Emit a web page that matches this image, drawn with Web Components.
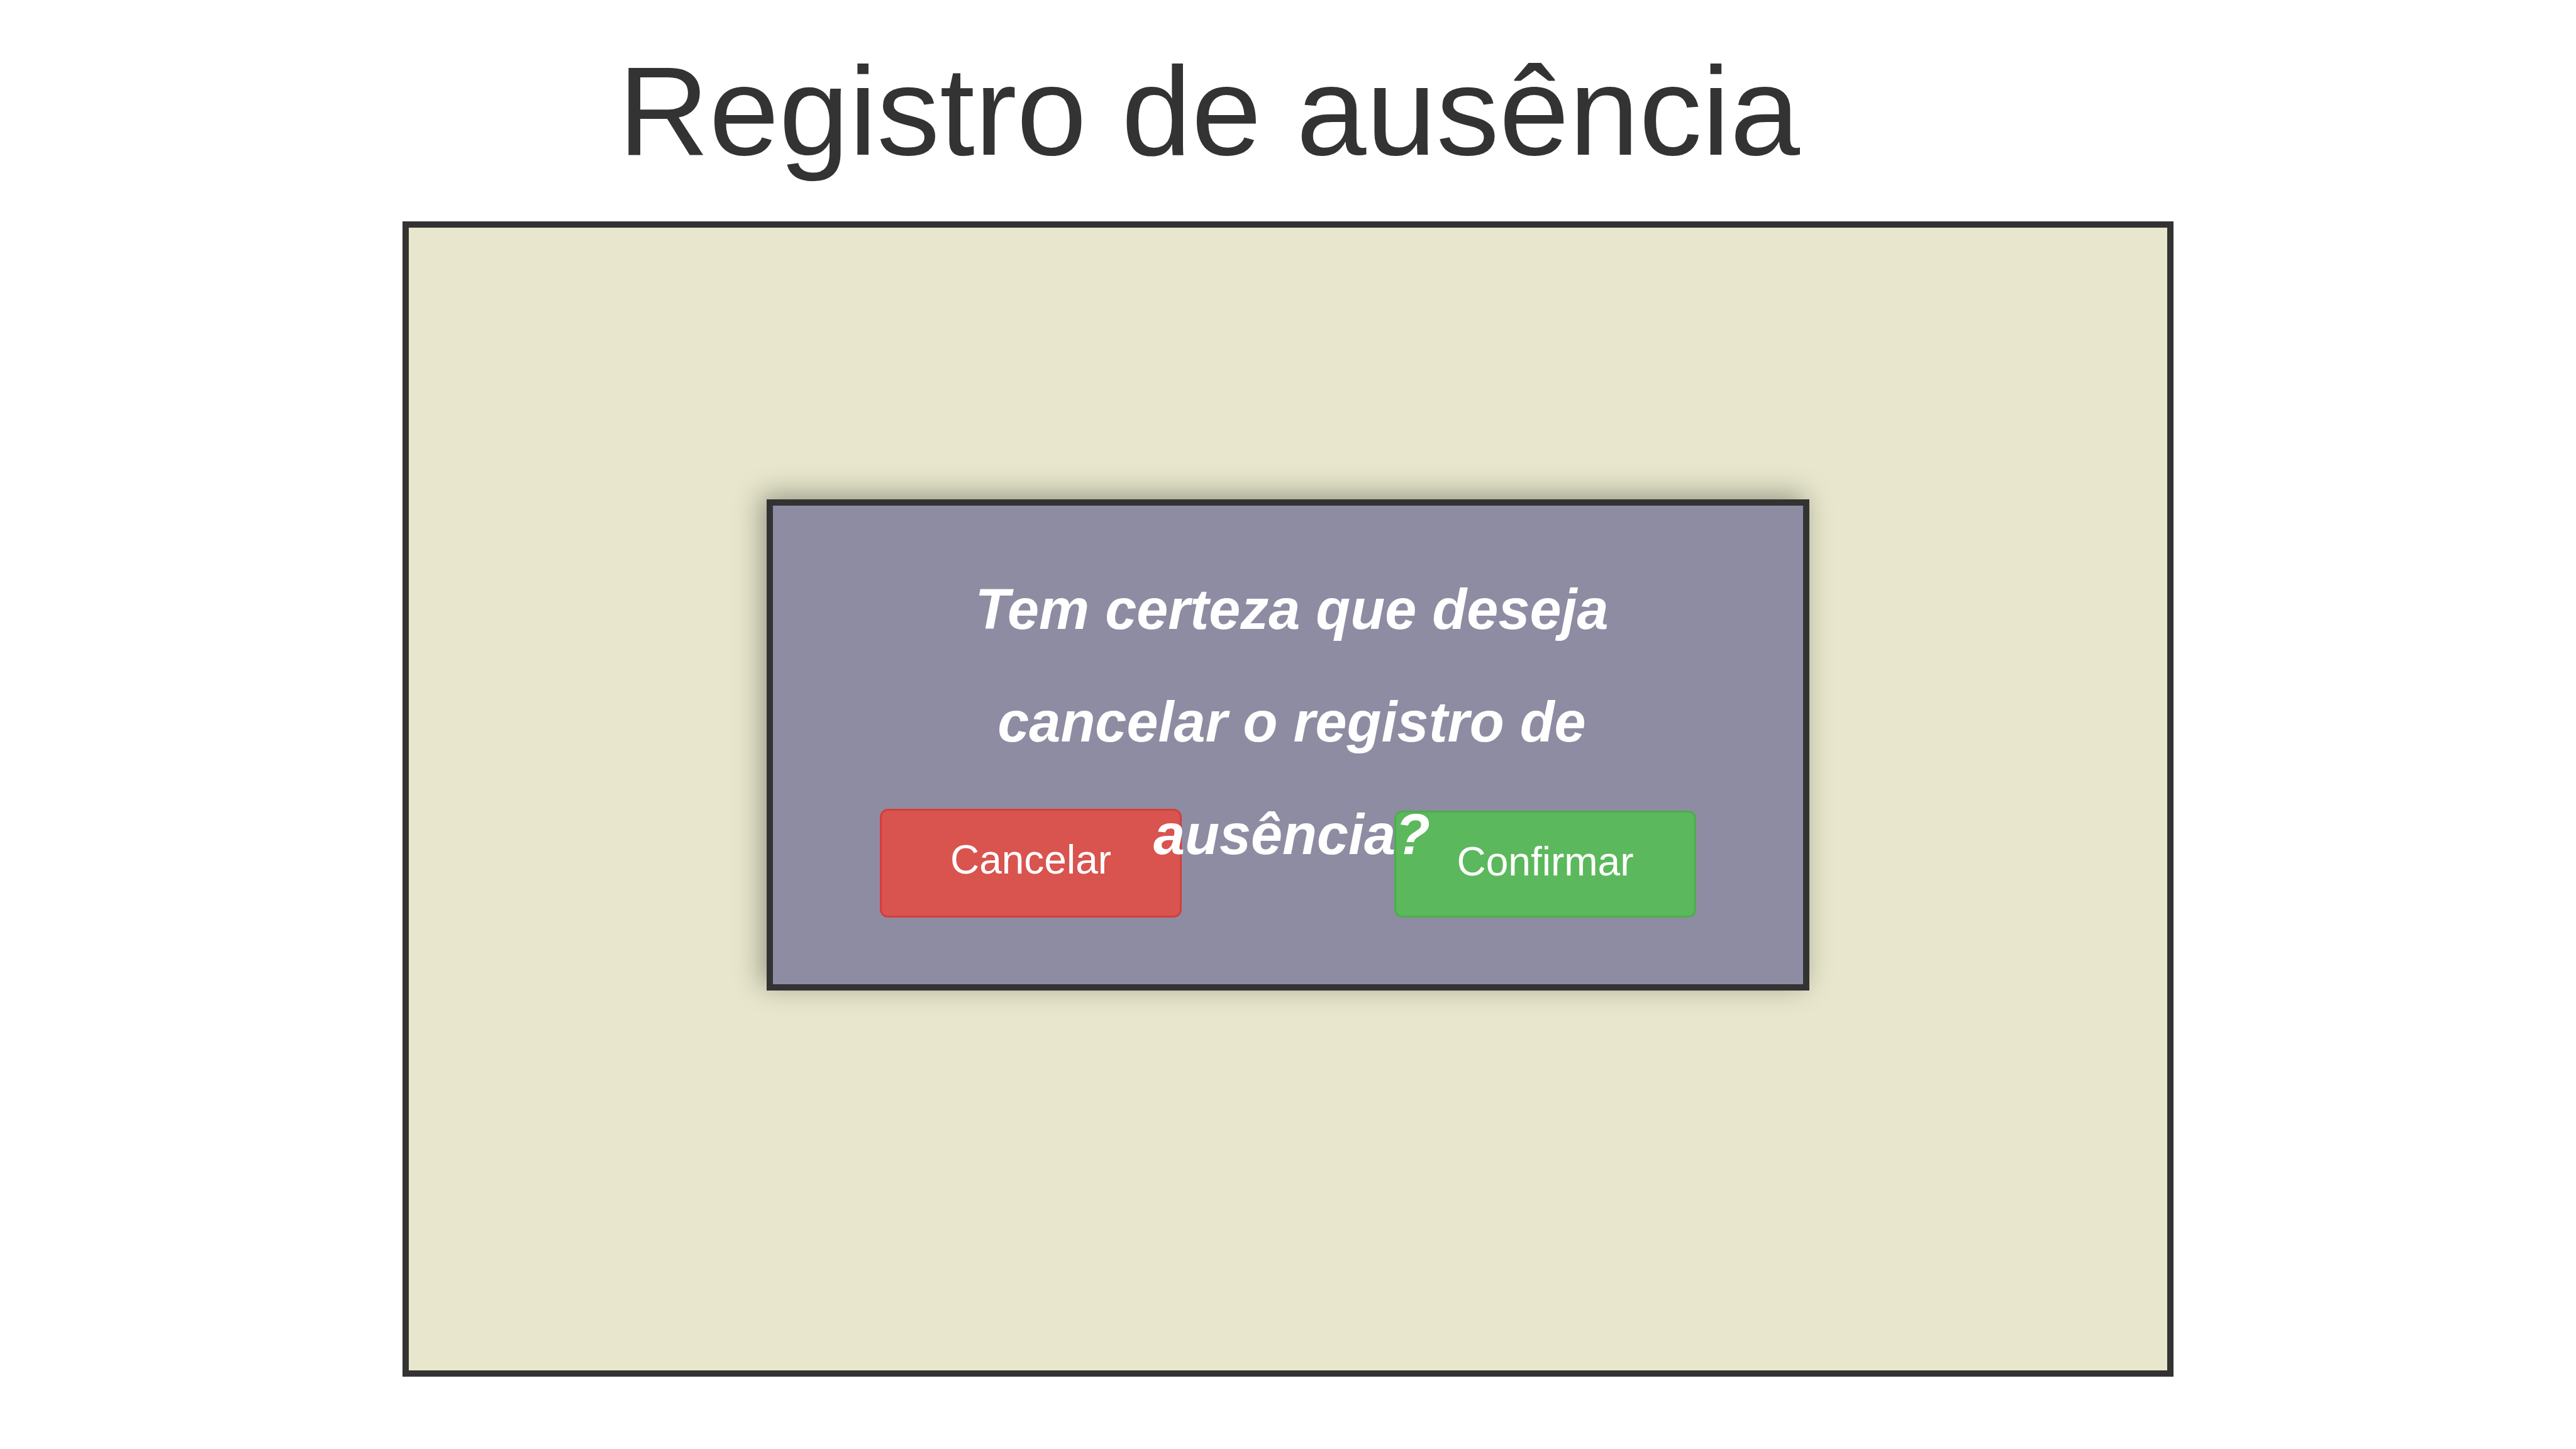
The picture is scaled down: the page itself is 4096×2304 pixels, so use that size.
<!DOCTYPE html>
<html lang="pt-BR">
<head>
<meta charset="utf-8">
<title>Registro de ausência</title>
<style>
  body { margin: 0; background: #fff; color: #333; font-family: Arial, "Liberation Sans", sans-serif; }
</style>
</head>
<body>
<absence-page>
  <span slot="title">Registro de ausência</span>
  <confirm-dialog>
    <span slot="message">Tem certeza que deseja cancelar o registro de ausência?</span>
    <action-button slot="actions" variant="danger">Cancelar</action-button>
    <action-button slot="actions" variant="success">Confirmar</action-button>
  </confirm-dialog>
</absence-page>

<template id="absence-page">
  <style>
    :host { display: block; }
    header { padding: 62px 24% 60px; }
    h1 { margin: 0; font-size: 200px; font-weight: 400; line-height: 230px; white-space: nowrap; }
    main {
      box-sizing: border-box; width: 68.75%; margin: 0 auto; padding: 432px 0 604px;
      display: flex; justify-content: center;
      background: #e8e7cd; border: 10px solid #333;
    }
  </style>
  <header><h1><slot name="title"></slot></h1></header>
  <main><slot></slot></main>
</template>

<template id="confirm-dialog">
  <style>
    :host { display: block; width: 59.3%; }
    section {
      display: grid; background: #8e8ca2; border: 10px solid #333;
      box-shadow: -8px -8px 40px rgba(0, 0, 0, .35);
    }
    p, .actions { grid-area: 1 / 1; }
    p {
      z-index: 1; pointer-events: none; justify-self: center; max-width: 1100px;
      margin: 0; padding: 76px 0 148px 12px;
      color: #fff; font-size: 90px; font-weight: 700; font-style: italic; line-height: 179px; text-align: center;
    }
    .actions { display: flex; justify-content: space-between; align-items: flex-end; padding: 0 170px 106px; }
  </style>
  <section role="dialog" aria-labelledby="message">
    <p id="message"><slot name="message"></slot></p>
    <div class="actions"><slot name="actions"></slot></div>
  </section>
</template>

<template id="action-button">
  <style>
    :host { display: block; }
    button {
      display: block; box-sizing: border-box; width: 480px; margin: 0; padding: 41px 0 52px;
      color: #fff; font-family: inherit; font-size: 64px; line-height: 74px; text-align: center;
      border: 3px solid; border-radius: 13px; cursor: pointer;
    }
    :host([variant="danger"]) button { background: #d9534f; border-color: #d43f3a; }
    :host([variant="success"]) button { background: #5cb85c; border-color: #4cae4c; padding-bottom: 49px; }
  </style>
  <button type="button"><slot></slot></button>
</template>

<script>
  for (const name of ["absence-page", "confirm-dialog", "action-button"]) {
    customElements.define(name, class extends HTMLElement {
      constructor() {
        super();
        this.attachShadow({ mode: "open" }).append(document.getElementById(name).content.cloneNode(true));
      }
    });
  }
</script>
</body>
</html>
